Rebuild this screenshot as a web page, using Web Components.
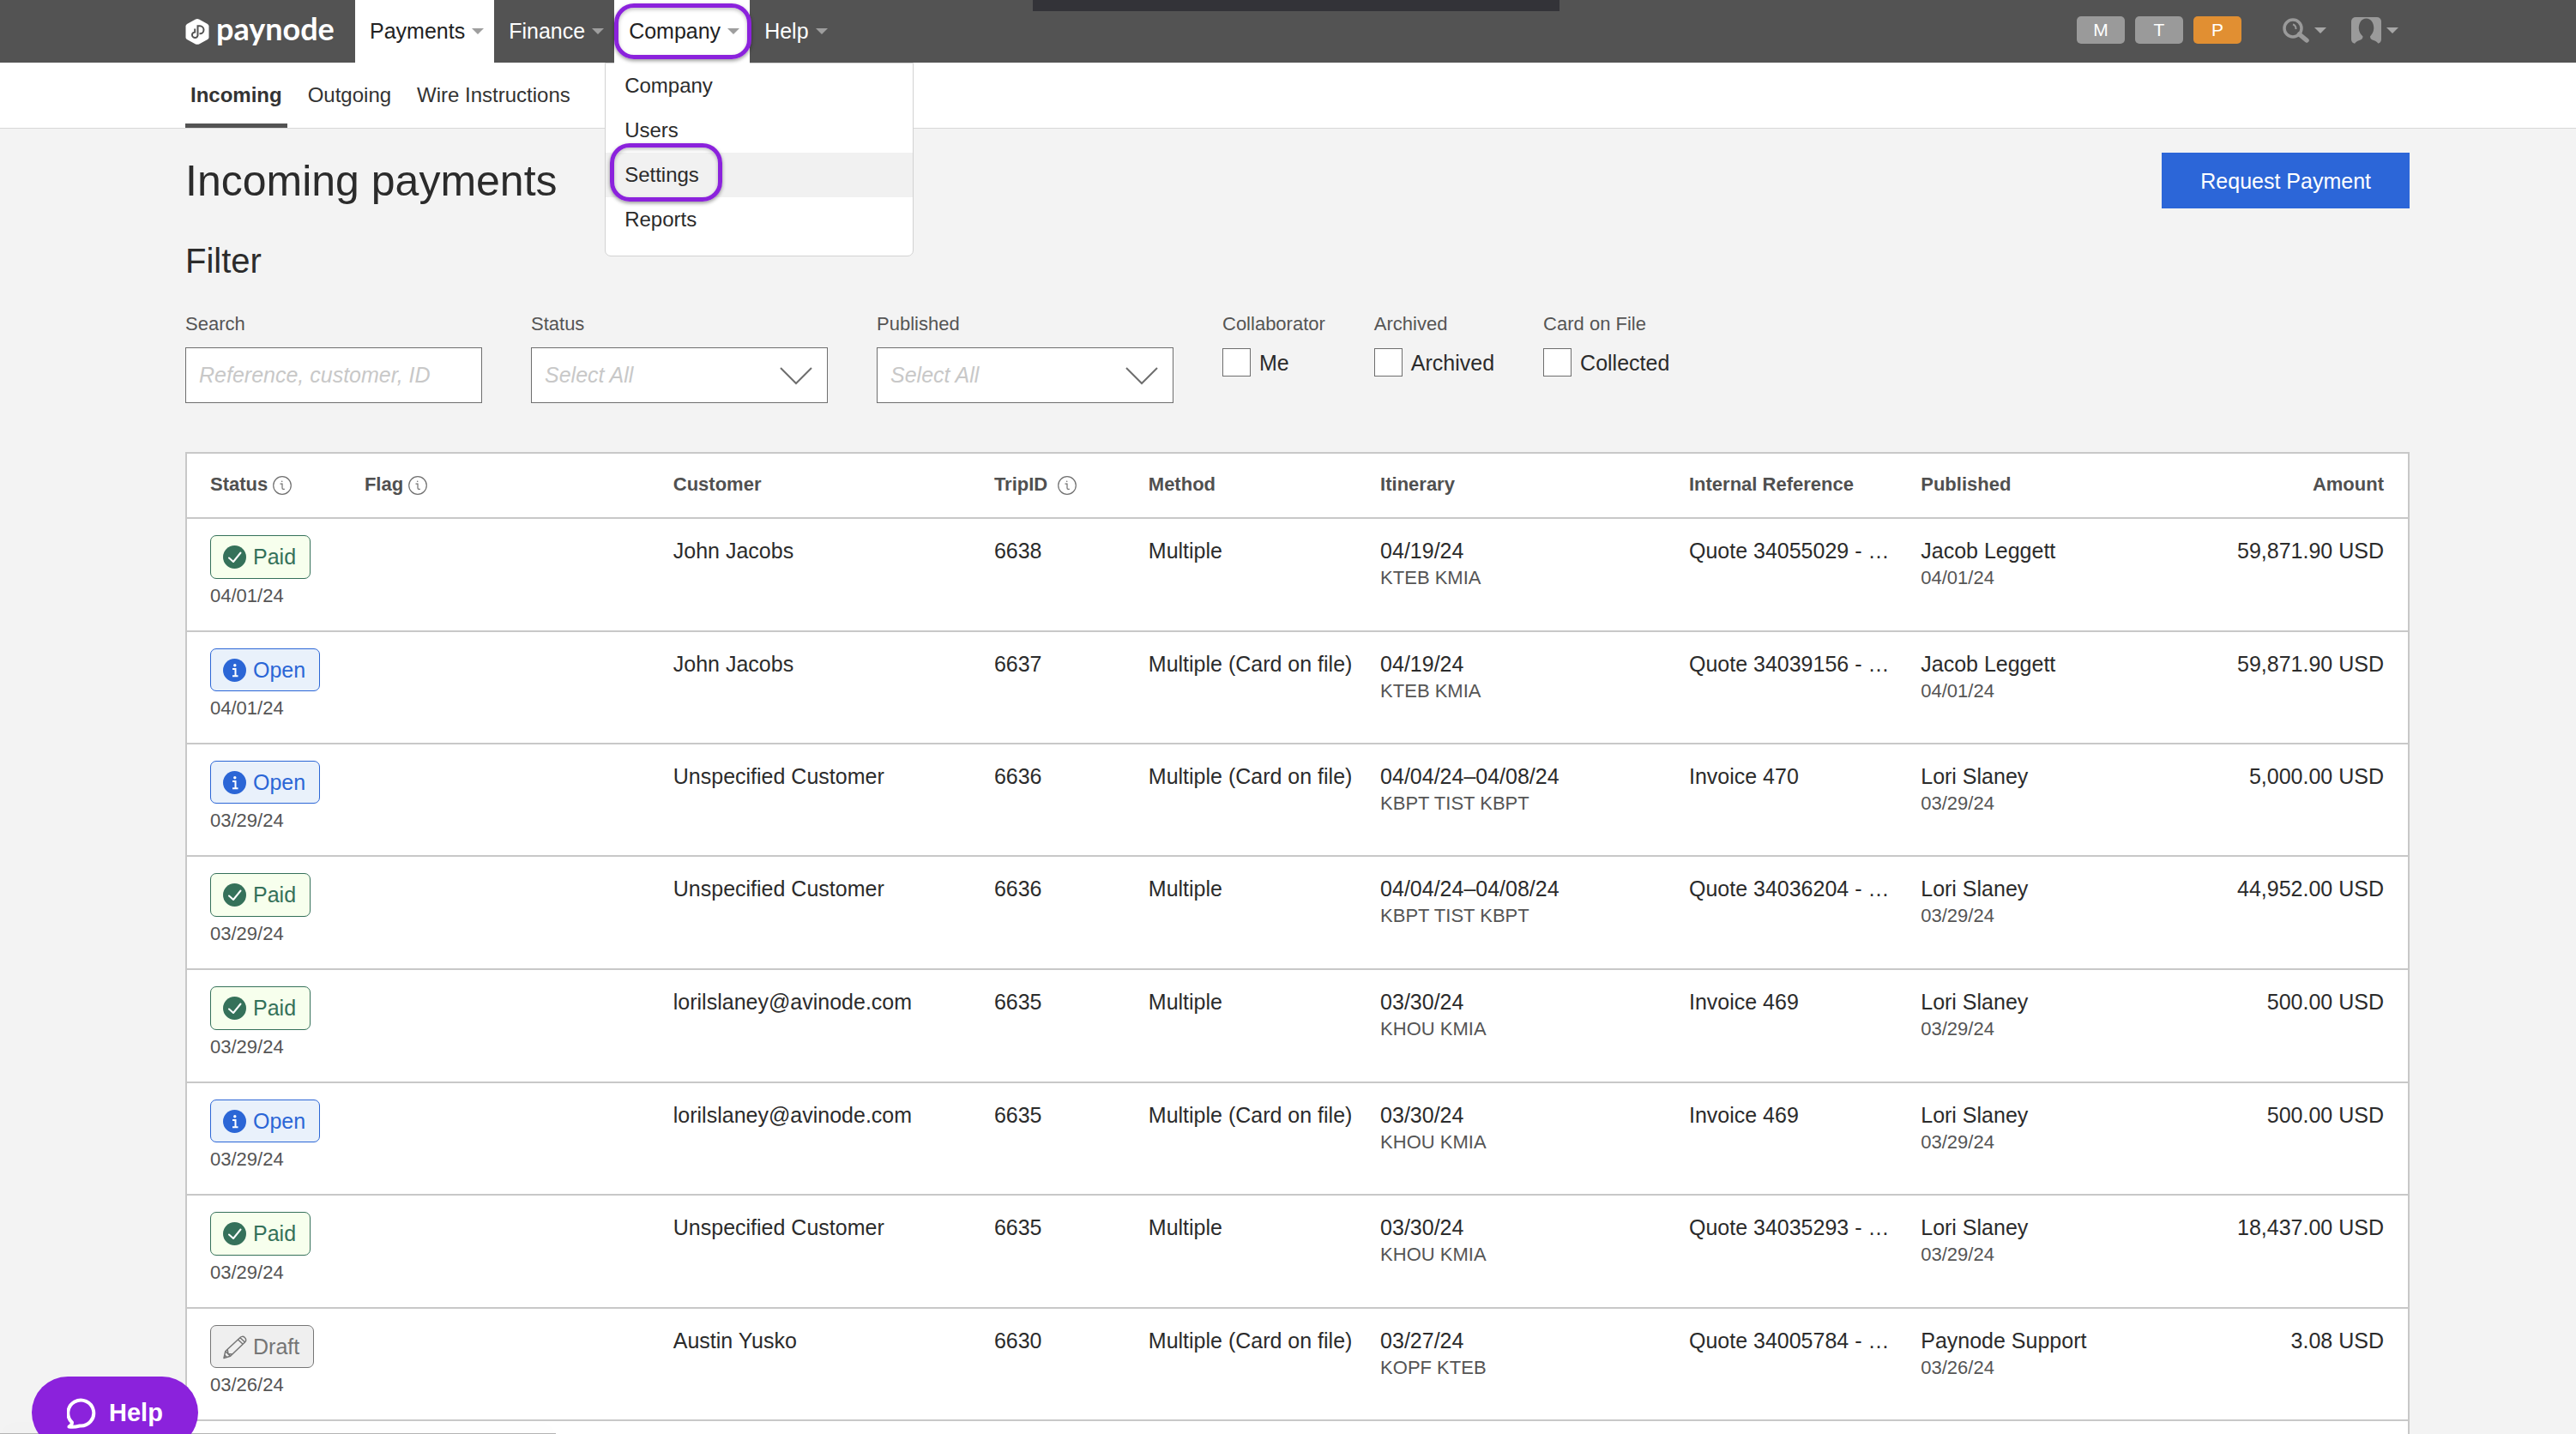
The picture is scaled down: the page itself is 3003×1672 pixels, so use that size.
<!DOCTYPE html>
<html lang="en">
<head>
<meta charset="utf-8">
<title>Incoming payments - Paynode</title>
<style>
  :root {
    --text: #2b2b2b;
    --muted: #555;
    --bar: #535353;
    --line: #c8c8c8;
    --field-line: #6e6e6e;
    --blue: #2c66d8;
    --purple: #8b22dc;
    --page-left: 216px;
    --page-right: 194px;
  }

  body {
    margin: 0;
    background: #f3f3f3;
    color: var(--text);
    font: 25px/32px "Liberation Sans", Arial, sans-serif;
  }
</style>
</head>
<body>
<pn-app>
  <pn-top-bar slot="top">
    <pn-nav-item label="Payments" active></pn-nav-item>
    <pn-nav-item label="Finance"></pn-nav-item>
    <pn-nav-item label="Company" active ring>
      <pn-menu>
        <pn-menu-item>Company</pn-menu-item>
        <pn-menu-item>Users</pn-menu-item>
        <pn-menu-item current>Settings</pn-menu-item>
        <pn-menu-item>Reports</pn-menu-item>
      </pn-menu>
    </pn-nav-item>
    <pn-nav-item label="Help"></pn-nav-item>
  </pn-top-bar>
  <pn-tabs slot="top">
    <pn-tab current>Incoming</pn-tab>
    <pn-tab>Outgoing</pn-tab>
    <pn-tab>Wire Instructions</pn-tab>
  </pn-tabs>
  <pn-page-title>
    Incoming payments
    <pn-button slot="action">Request Payment</pn-button>
  </pn-page-title>
  <pn-filter>
    <pn-text-field label="Search" placeholder="Reference, customer, ID"></pn-text-field>
    <pn-select-field label="Status" placeholder="Select All"></pn-select-field>
    <pn-select-field label="Published" placeholder="Select All"></pn-select-field>
    <pn-check-field label="Collaborator" option="Me"></pn-check-field>
    <pn-check-field label="Archived" option="Archived"></pn-check-field>
    <pn-check-field label="Card on File" option="Collected"></pn-check-field>
  </pn-filter>
  <pn-payments-table></pn-payments-table>
  <pn-help-button slot="overlay">Help</pn-help-button>
</pn-app>

<script>
// Attaches an open shadow root filled with the given markup.
function define(name, html, setup) {
  const template = document.createElement("template");
  template.innerHTML = `<style>* { box-sizing: border-box; }</style>${html}`;

  customElements.define(
    name,
    class extends HTMLElement {
      constructor() {
        super();
        this.attachShadow({ mode: "open" });
        this.shadowRoot.appendChild(template.content.cloneNode(true));
      }

      connectedCallback() {
        if (this.ready_) return;
        this.ready_ = true;
        if (setup) setup(this, this.shadowRoot);
      }
    },
  );
}

define("pn-app", `
<style>
  :host {
    position: relative;
    display: flex;
    flex-direction: column;
    height: 100vh;
    overflow: hidden;
  }

  main {
    flex: 1;
    display: flex;
    flex-direction: column;
    padding: 28px var(--page-right) 0 var(--page-left);
  }

  .notch {
    position: absolute;
    z-index: 6;
    top: 0;
    left: 1204px;
    width: 614px;
    height: 13px;
    background: #333338;
  }

  .status-edge {
    position: absolute;
    bottom: 0;
    left: 0;
    width: 648px;
    height: 1px;
    background: #b4b4b4;
    box-shadow: 0 0 26px rgba(0, 0, 0, 0.2);
  }
</style>
<slot name="top"></slot>
<main><slot></slot></main>
<div class="notch"></div>
<div class="status-edge"></div>
<slot name="overlay"></slot>
`);

define("pn-top-bar", `
<style>
  :host {
    position: relative;
    z-index: 5;
    display: block;
    background: var(--bar);
    color: #fff;
  }

  header {
    display: flex;
    height: 73px;
    padding: 0 var(--page-right) 0 var(--page-left);
  }

  .logo {
    display: flex;
    align-items: center;
    gap: 8px;
    width: 198px;
    color: #fff;
    font: 700 36px/40px Lato, "Liberation Sans", sans-serif;
    text-decoration: none;
  }

  .logo span {
    padding-bottom: 8px;
  }

  nav,
  .tools,
  .chips {
    display: flex;
  }

  .tools {
    align-items: flex-start;
    margin-left: auto;
    padding: 19px 13px 0 0;
  }

  .chips {
    gap: 12px;
    margin-right: 48px;
  }

  .chips button {
    width: 56px;
    height: 32px;
    padding: 0;
    border: 0;
    border-radius: 5px;
    background: #9a9a9a;
    color: #fff;
    font: 21px/32px "Liberation Sans", Arial, sans-serif;
  }

  .chips .current {
    background: #e18f32;
  }

  .tool {
    display: flex;
    align-items: center;
    gap: 6px;
    height: 32px;
    padding: 0;
    border: 0;
    background: none;
  }

  .tool + .tool {
    margin-left: 29px;
  }

  svg {
    display: block;
  }
</style>
<header>
  <a class="logo" href="#">
    <svg width="28" height="32" viewBox="0 0 28 32">
      <path d="M14 1 Q15 1 16.500 1.800 L26 7 Q27.500 8 27.500 9.600 V22.400 Q27.500 24 26 25 L16.500 30.200 Q14 31.500 11.500 30.200 L2 25 Q.5 24 .5 22.400 V9.600 Q.5 8 2 7 L11.500 1.800 Q13 1 14 1Z" fill="#fff"/>
      <path d="M14.500 20.500V9.300H17A4.500 4.500 0 0 1 17 18.300H16.500M14.500 19A3.300 3.300 0 1 1 11.200 16.400V12.500" fill="none" stroke="#535353" stroke-width="2"/>
    </svg>
    <span>paynode</span>
  </a>
  <nav><slot></slot></nav>
  <div class="tools">
    <div class="chips">
      <button>M</button>
      <button>T</button>
      <button class="current">P</button>
    </div>
    <button class="tool" aria-label="Search">
      <svg width="31" height="30" viewBox="0 0 31 30" fill="none" stroke="#9a9a9a">
        <circle cx="12" cy="13" r="10" stroke-width="3.500"/>
        <path d="M12 8.500 Q15.500 9.500 15.500 14" stroke-width="2"/>
        <path d="M19.500 20 L28 27" stroke-width="5.500" stroke-linecap="round"/>
      </svg>
      <svg width="14" height="7" viewBox="0 0 14 7"><path d="M0 0H14L7 7Z" fill="#a6a6a6"/></svg>
    </button>
    <button class="tool" aria-label="Account">
      <svg width="35" height="31" viewBox="0 0 35 31">
        <rect width="35" height="31" rx="5" fill="#9a9a9a"/>
        <path d="M17.500 1.500 C23 1.500 26.500 7 26.300 13 C26.100 17.500 24 20 22 22.500 C22 25 23 26 26 27 C29 28 30.500 29 31.500 31 H4 C5 29 6.500 28 9.500 27 C12.500 26 13.500 25 13.500 22.500 C11 20 9 17.500 8.800 13 C8.600 7 12 1.500 17.500 1.500Z" fill="#535353"/>
      </svg>
      <svg width="14" height="7" viewBox="0 0 14 7"><path d="M0 0H14L7 7Z" fill="#a6a6a6"/></svg>
    </button>
  </div>
</header>
`);

define("pn-nav-item", `
<style>
  :host {
    position: relative;
    display: block;
    height: 73px;
  }

  button {
    position: relative;
    z-index: 2;
    display: flex;
    align-items: center;
    gap: 8px;
    height: 100%;
    padding: 0 12px 0 17px;
    border: 0;
    background: none;
    color: #fff;
    font: 25px/32px "Liberation Sans", Arial, sans-serif;
  }

  .label {
    padding-bottom: 2px;
  }

  :host([active]) button {
    height: 74px;
    padding-bottom: 1px;
    background: #fff;
    color: #222;
  }

  .ring {
    display: none;
  }

  :host([ring]) .ring {
    position: absolute;
    z-index: 3;
    top: 4px;
    left: 0;
    right: -2px;
    display: block;
    height: 65px;
    border: 5px solid var(--purple);
    border-radius: 23px;
    box-shadow: 0 2px 4px rgba(0, 0, 0, 0.4), inset 0 2px 4px rgba(0, 0, 0, 0.25);
    pointer-events: none;
  }
</style>
<button>
  <span class="label"></span>
  <svg width="14" height="7" viewBox="0 0 14 7"><path d="M0 0H14L7 7Z" fill="#9e9e9e"/></svg>
</button>
<div class="ring"></div>
<slot></slot>
`, (el, root) => {
  root.querySelector(".label").textContent = el.getAttribute("label");
});

define("pn-menu", `
<style>
  :host {
    position: absolute;
    z-index: 1;
    top: 73px;
    left: -11px;
    width: 360px;
    padding-bottom: 16px;
    background: #fff;
    border: 1px solid #d2d2d2;
    border-radius: 0 0 7px 7px;
    box-sizing: border-box;
  }
</style>
<slot></slot>
`);

define("pn-menu-item", `
<style>
  :host {
    position: relative;
    display: block;
  }

  a {
    display: block;
    padding: 10px 22px;
    color: var(--text);
    font-size: 24px;
    line-height: 32px;
    text-decoration: none;
  }

  :host([current]) a {
    background: #f1f1f1;
  }

  .ring {
    display: none;
  }

  :host([current]) .ring {
    position: absolute;
    top: -11px;
    left: 5px;
    display: block;
    width: 131px;
    height: 68px;
    border: 5px solid var(--purple);
    border-radius: 23px;
    box-shadow: 0 2px 4px rgba(0, 0, 0, 0.4), inset 0 2px 4px rgba(0, 0, 0, 0.25);
    pointer-events: none;
  }
</style>
<a href="#"><slot></slot></a>
<div class="ring"></div>
`);

define("pn-tabs", `
<style>
  :host {
    display: flex;
    flex-shrink: 0;
    gap: 18px;
    padding: 0 var(--page-right) 0 var(--page-left);
    background: #fff;
    border-bottom: 1px solid #d8d8d8;
  }
</style>
<slot></slot>
`);

define("pn-tab", `
<style>
  :host {
    display: block;
  }

  a {
    display: block;
    padding: 22px 6px;
    color: #333;
    font-size: 24px;
    line-height: 32px;
    text-decoration: none;
  }

  :host([current]) a {
    box-shadow: inset 0 -5px var(--bar);
    font-weight: bold;
  }
</style>
<a href="#"><slot></slot></a>
`);

define("pn-page-title", `
<style>
  :host {
    display: flex;
    justify-content: space-between;
  }

  h1 {
    margin: 0;
    font-size: 50px;
    font-weight: normal;
    line-height: 66px;
  }
</style>
<h1><slot></slot></h1>
<slot name="action"></slot>
`);

define("pn-button", `
<style>
  :host {
    display: block;
  }

  button {
    height: 65px;
    padding: 0 45px;
    border: 0;
    background: var(--blue);
    color: #fff;
    font: 25px/32px "Liberation Sans", Arial, sans-serif;
  }
</style>
<button><slot></slot></button>
`);

define("pn-filter", `
<style>
  :host {
    display: block;
    margin: 36px 0 57px;
  }

  h2 {
    margin: 0 0 36px;
    font-size: 40px;
    font-weight: normal;
    line-height: 48px;
  }

  form {
    display: flex;
    align-items: flex-start;
    gap: 57px;
  }
</style>
<h2>Filter</h2>
<form><slot></slot></form>
`);

const fieldStyle = `
<style>
  :host {
    display: block;
    width: 346px;
  }

  .label {
    display: block;
    margin-bottom: 13px;
    color: var(--muted);
    font-size: 22px;
    line-height: 28px;
  }

  input,
  select {
    display: block;
    width: 100%;
    height: 65px;
    margin: 0;
    padding: 0 15px;
    border: 1px solid var(--field-line);
    border-radius: 0;
    background: #fff;
    color: var(--text);
    font: 25px/32px "Liberation Sans", Arial, sans-serif;
    appearance: none;
  }

  input::placeholder {
    color: #c8c8c8;
    font-style: italic;
    opacity: 1;
  }
</style>`;

define("pn-text-field", `
${fieldStyle}
<label class="label" for="field"></label>
<input id="field" type="text">
`, (el, root) => {
  root.querySelector("label").textContent = el.getAttribute("label");
  root.querySelector("input").placeholder = el.getAttribute("placeholder");
});

define("pn-select-field", `
${fieldStyle}
<style>
  .box {
    position: relative;
  }

  select {
    padding-bottom: 2px;
    color: #c8c8c8;
    font-style: italic;
  }

  svg {
    position: absolute;
    top: 23px;
    right: 18px;
    pointer-events: none;
  }
</style>
<label class="label" for="field"></label>
<div class="box">
  <select id="field"><option></option></select>
  <svg width="38" height="21" viewBox="0 0 38 21"><path d="M1 1L19 19L37 1" fill="none" stroke="#6e6e6e" stroke-width="2"/></svg>
</div>
`, (el, root) => {
  root.querySelector("label").textContent = el.getAttribute("label");
  root.querySelector("option").textContent = el.getAttribute("placeholder");
});

define("pn-check-field", `
${fieldStyle}
<style>
  :host {
    width: auto;
  }

  .option {
    display: flex;
    align-items: center;
    gap: 10px;
    padding-top: 1px;
  }

  .option input {
    width: 33px;
    height: 33px;
    padding: 0;
  }
</style>
<span class="label"></span>
<label class="option"><input type="checkbox"><span class="text"></span></label>
`, (el, root) => {
  root.querySelector(".label").textContent = el.getAttribute("label");
  root.querySelector(".text").textContent = el.getAttribute("option");
});

const badgeIcons = {
  Paid: `
    <circle cx="13.500" cy="13.500" r="13.500" fill="currentColor"/>
    <path d="M7 14.500L12 19L20.500 8.500" fill="none" stroke="#fff" stroke-width="2" stroke-linecap="round" stroke-linejoin="round"/>`,
  Open: `
    <circle cx="13.500" cy="13.500" r="13.500" fill="currentColor"/>
    <circle cx="13.800" cy="7.800" r="1.700" fill="#fff"/>
    <path d="M11 12H14.500V20M11 20.300H17.500" fill="none" stroke="#fff" stroke-width="2"/>`,
  Draft: `
    <path d="M1 26.500L2.800 18.500L20 2.500C21 1.200 23.500 .8 25.300 2.500C27.200 4.200 27 6.500 25.700 7.700L8.500 24.300ZM2.800 18.500L8.500 24.300M5.200 16.500L6 21.500L11 22M17.500 5L23.200 10.200M20 2.800L25.500 8M1 26.500L4.300 25.500L2 23Z" fill="none" stroke="currentColor" stroke-width="1.500" stroke-linejoin="round"/>`,
};

define("pn-badge", `
<style>
  :host {
    display: inline-flex;
    align-items: center;
    gap: 8px;
    padding: 10px 16px 10px 14px;
    border: 1px solid;
    border-radius: 7px;
    line-height: 28px;
    vertical-align: top;
  }

  :host([kind="Paid"]) {
    background: #f7ffed;
    color: #35715a;
    line-height: 29px;
  }

  :host([kind="Open"]) {
    background: #e9f1fb;
    color: #2b66d6;
  }

  :host([kind="Draft"]) {
    background: #efefef;
    color: #757575;
  }
</style>
<svg width="27" height="27" viewBox="0 0 27 27" overflow="visible"></svg>
<span></span>
`, (el, root) => {
  const kind = el.getAttribute("kind");
  root.querySelector("svg").innerHTML = badgeIcons[kind];
  root.querySelector("span").textContent = kind;
});

define("pn-info", `
<style>
  :host {
    display: inline-block;
    margin-left: 6px;
    vertical-align: top;
  }

  svg {
    display: block;
    margin-top: 4px;
  }
</style>
<svg width="22" height="22" viewBox="0 0 22 22" fill="none" stroke="#707070">
  <circle cx="11" cy="11" r="10.300" stroke-width="1.200"/>
  <path d="M8.500 9.200H11V14Q11 15.300 12.200 15.300H13.800" stroke-width="1.200"/>
  <circle cx="10.700" cy="6.300" r=".8" fill="#707070" stroke="none"/>
</svg>
`);

const payments = [
  ["Paid", "04/01/24", "John Jacobs", "6638", "Multiple", "04/19/24", "KTEB KMIA", "Quote 34055029 - …", "Jacob Leggett", "59,871.90 USD"],
  ["Open", "04/01/24", "John Jacobs", "6637", "Multiple (Card on file)", "04/19/24", "KTEB KMIA", "Quote 34039156 - …", "Jacob Leggett", "59,871.90 USD"],
  ["Open", "03/29/24", "Unspecified Customer", "6636", "Multiple (Card on file)", "04/04/24–04/08/24", "KBPT TIST KBPT", "Invoice 470", "Lori Slaney", "5,000.00 USD"],
  ["Paid", "03/29/24", "Unspecified Customer", "6636", "Multiple", "04/04/24–04/08/24", "KBPT TIST KBPT", "Quote 34036204 - …", "Lori Slaney", "44,952.00 USD"],
  ["Paid", "03/29/24", "lorilslaney@avinode.com", "6635", "Multiple", "03/30/24", "KHOU KMIA", "Invoice 469", "Lori Slaney", "500.00 USD"],
  ["Open", "03/29/24", "lorilslaney@avinode.com", "6635", "Multiple (Card on file)", "03/30/24", "KHOU KMIA", "Invoice 469", "Lori Slaney", "500.00 USD"],
  ["Paid", "03/29/24", "Unspecified Customer", "6635", "Multiple", "03/30/24", "KHOU KMIA", "Quote 34035293 - …", "Lori Slaney", "18,437.00 USD"],
  ["Draft", "03/26/24", "Austin Yusko", "6630", "Multiple (Card on file)", "03/27/24", "KOPF KTEB", "Quote 34005784 - …", "Paynode Support", "3.08 USD"],
];

define("pn-payments-table", `
<style>
  :host {
    flex: 1 0 auto;
    display: block;
    background: #fff;
    border: 2px solid var(--line);
    border-bottom: 0;
  }

  table {
    width: 100%;
    table-layout: fixed;
    border-collapse: separate;
    border-spacing: 0;
  }

  .narrow { width: 6.95%; }
  .medium { width: 10.44%; }
  .wide { width: 13.9%; }
  .customer { width: 14.45%; }

  th,
  td {
    padding: 21px 0 24px 27px;
    border-bottom: 2px solid var(--line);
    text-align: left;
    vertical-align: top;
    white-space: nowrap;
  }

  th {
    padding-top: 22px;
    color: #505050;
    font-size: 22px;
    line-height: 28px;
  }

  td:first-child {
    padding-top: 19px;
  }

  th:last-child,
  td:last-child {
    padding-right: 28px;
    text-align: right;
  }

  small {
    display: block;
    color: var(--muted);
    font-size: 22px;
    line-height: 32px;
  }

  .status {
    display: flex;
    flex-direction: column;
    align-items: flex-start;
    gap: 4px;
  }
</style>
<table>
  <colgroup>
    <col class="narrow"><col class="wide"><col class="customer"><col class="narrow">
    <col class="medium"><col class="wide"><col class="medium"><col class="medium"><col>
  </colgroup>
  <thead>
    <tr>
      <th>Status<pn-info></pn-info></th>
      <th>Flag<pn-info></pn-info></th>
      <th>Customer</th>
      <th>TripID <pn-info></pn-info></th>
      <th>Method</th>
      <th>Itinerary</th>
      <th>Internal Reference</th>
      <th>Published</th>
      <th>Amount</th>
    </tr>
  </thead>
  <tbody></tbody>
</table>
`, (el, root) => {
  root.querySelector("tbody").innerHTML = payments
    .map(([status, date, customer, trip, method, days, route, reference, by, amount]) => `
      <tr>
        <td><div class="status"><pn-badge kind="${status}"></pn-badge><small>${date}</small></div></td>
        <td></td>
        <td>${customer}</td>
        <td>${trip}</td>
        <td>${method}</td>
        <td>${days}<small>${route}</small></td>
        <td>${reference}</td>
        <td>${by}<small>${date}</small></td>
        <td>${amount}</td>
      </tr>`)
    .join("");
});

define("pn-help-button", `
<style>
  :host {
    position: absolute;
    left: 37px;
    bottom: -17px;
  }

  button {
    display: flex;
    align-items: center;
    gap: 14px;
    height: 84px;
    padding: 0 41px;
    border: 0;
    border-radius: 42px;
    background: var(--purple);
    color: #fff;
    font: bold 29px/32px "Liberation Sans", Arial, sans-serif;
  }
</style>
<button>
  <svg width="35" height="37" viewBox="0 0 35 37">
    <path d="M6 29.500A15 15 0 1 1 15 33.500Q8 35.500 2.500 34.500Q6 32.500 6 29.500Z" fill="none" stroke="#fff" stroke-width="4" stroke-linejoin="round"/>
  </svg>
  <slot></slot>
</button>
`);
</script>
</body>
</html>
